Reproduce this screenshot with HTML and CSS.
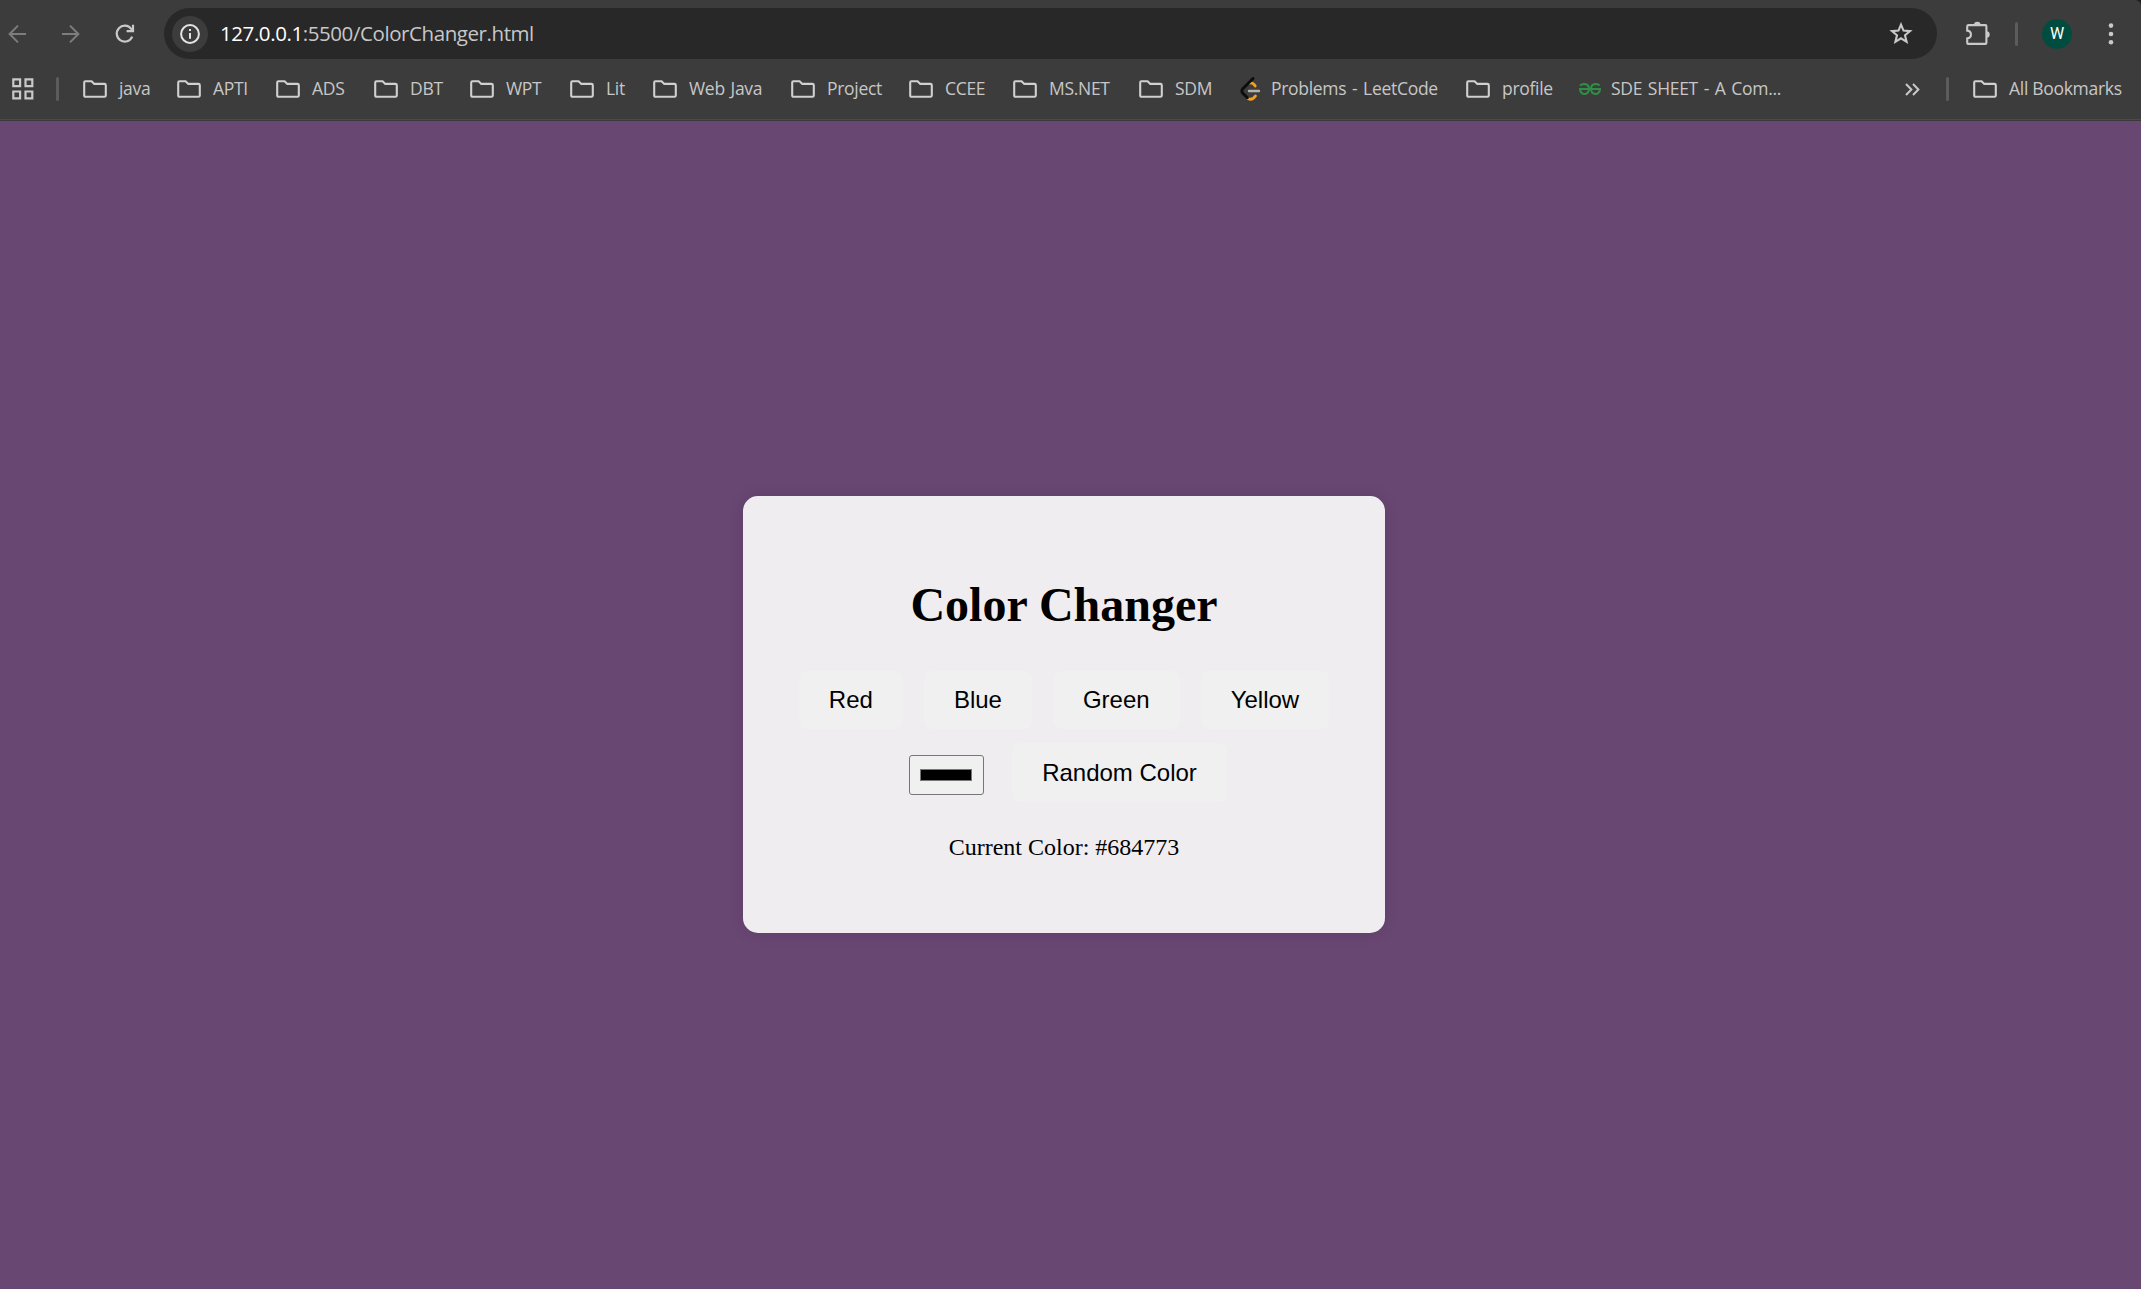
FILE: index.html
```html
<!DOCTYPE html>
<html lang="en">
<head>
<meta charset="utf-8">
<title>Color Changer</title>
<link rel="stylesheet" href="styles.css">
</head>
<body>
<svg width="0" height="0" class="defs">
  <symbol id="folder" viewBox="0 0 24 18"><path d="M1.2 2.4Q1.2 1.2 2.4 1.2H8.6L11.3 3.9H21.4Q22.8 3.9 22.8 5.2V15.4Q22.8 16.8 21.4 16.8H2.6Q1.2 16.8 1.2 15.4Z" fill="none" stroke="#d0d0d0" stroke-width="2.1"/></symbol>
</svg>
<header class="chrome">
  <div class="toolbar">
    <svg class="nav" width="18" height="20" viewBox="0 0 18 20" fill="none" stroke="#7d7d7d" stroke-width="2"><path d="M18 10H1.8M10 1.6L1.6 10L10 18.4"/></svg>
    <svg class="nav forward" width="18" height="20" viewBox="0 0 18 20" fill="none" stroke="#7d7d7d" stroke-width="2"><path d="M0 10H16.2M8 1.6L16.4 10L8 18.4"/></svg>
    <svg class="nav reload" width="20" height="20" viewBox="0 0 20 20" fill="none" stroke="#c9c9c9" stroke-width="2.2"><path d="M17.2 12.6A8 8 0 1 1 16.2 4.9L17.6 6.6"/><path d="M18 .8V7.2H11.6"/></svg>
    <div class="omnibox">
      <span class="info"><svg width="20" height="20" viewBox="0 0 20 20"><circle cx="10" cy="10" r="8.9" fill="none" stroke="#e3e3e3" stroke-width="2"/><path d="M10 9V14.8M10 5V7.1" stroke="#e3e3e3" stroke-width="2"/></svg></span>
      <span class="url"><b>127.0.0.1</b>:5500/ColorChanger.html</span>
      <svg class="star" width="24" height="23" viewBox="0 0 24 23"><path d="M12 2.6L14.5 8.6L21 9.1L16 13.3L17.6 19.8L12 16.3L6.4 19.8L8 13.3L3 9.1L9.5 8.6Z" fill="none" stroke="#c9c9c9" stroke-width="2.1"/></svg>
    </div>
    <svg class="puzzle" width="26" height="26" viewBox="0 0 26 26"><path d="M3.6 4.1H20.4Q21.4 4.1 21.4 5.1V21.9Q21.4 22.9 20.4 22.9H3.6Q2.2 22.9 2.2 21.7V17.4C7.2 16.9 7.2 10.1 2.2 9.6V5.4Q2.2 4.1 3.6 4.1Z" fill="none" stroke="#c9c9c9" stroke-width="2.1"/><path d="M9 4.1a3.3 3.3 0 0 1 6.6 0ZM21.4 10.3a3.3 3.3 0 0 1 0 6.6Z" fill="#c9c9c9"/></svg>
    <i class="divider"></i>
    <span class="avatar">W</span>
    <svg class="dots" width="6" height="22" viewBox="0 0 6 22" fill="#c9c9c9"><circle cx="3" cy="2.6" r="2.3"/><circle cx="3" cy="11" r="2.3"/><circle cx="3" cy="19.3" r="2.3"/></svg>
  </div>
  <nav class="bookmarks">
    <svg class="apps" width="22" height="22" viewBox="0 0 22 22" fill="none" stroke="#c9c9c9" stroke-width="2.2"><path d="M1.3 1.3H8.1V8.1H1.3ZM13.5 1.3H20.3V8.1H13.5ZM1.3 13.5H8.1V20.3H1.3ZM13.5 13.5H20.3V20.3H13.5Z"/></svg>
    <i class="divider"></i>
    <ul class="list">
      <li><svg class="folder"><use href="#folder"/></svg><span>java</span></li>
      <li><svg class="folder"><use href="#folder"/></svg><span>APTI</span></li>
      <li><svg class="folder"><use href="#folder"/></svg><span>ADS</span></li>
      <li><svg class="folder"><use href="#folder"/></svg><span>DBT</span></li>
      <li><svg class="folder"><use href="#folder"/></svg><span>WPT</span></li>
      <li><svg class="folder"><use href="#folder"/></svg><span>Lit</span></li>
      <li><svg class="folder"><use href="#folder"/></svg><span>Web Java</span></li>
      <li><svg class="folder"><use href="#folder"/></svg><span>Project</span></li>
      <li><svg class="folder"><use href="#folder"/></svg><span>CCEE</span></li>
      <li><svg class="folder"><use href="#folder"/></svg><span>MS.NET</span></li>
      <li><svg class="folder"><use href="#folder"/></svg><span>SDM</span></li>
      <li class="site"><svg class="leetcode" width="21" height="24" viewBox="0 0 21 24" fill="none" stroke-linecap="round" stroke-width="2.8"><path d="M10 6Q13 5.6 15.2 9M15.4 19Q12.4 23.4 8.4 21.8" stroke="#f5a01e"/><path d="M13 1.4L2.6 12Q1 14 2.6 16L7.4 20.8" stroke="#0c0c0c"/><path d="M9 14H19" stroke="#b3b3b3" stroke-width="2.4"/></svg><span>Problems - LeetCode</span></li>
      <li><svg class="folder"><use href="#folder"/></svg><span>profile</span></li>
      <li class="site"><svg class="geeks" width="22" height="12" viewBox="0 0 22 12" fill="none" stroke="#2f8d46" stroke-width="2.1"><path d="M1 2.6Q3 1 5.4 1Q10 1.4 10 6Q9.6 11 5.4 11Q1.4 10.6 1 6H21Q20.6 10.6 16.6 11Q12.4 11 12 6Q12 1.4 16.6 1Q19 1 20.6 2.6"/></svg><span>SDE SHEET - A Com...</span></li>
    </ul>
    <svg class="more" width="15" height="13" viewBox="0 0 15 13" fill="none" stroke="#c9c9c9" stroke-width="2"><path d="M1 1L6.4 6.5L1 12M8 1L13.4 6.5L8 12"/></svg>
    <i class="divider"></i>
    <span class="all"><svg class="folder"><use href="#folder"/></svg><span>All Bookmarks</span></span>
  </nav>
</header>
<main class="page">
  <section class="card">
    <h1>Color Changer</h1>
    <div class="row">
      <button>Red</button><button>Blue</button><button>Green</button><button>Yellow</button>
    </div>
    <div class="row second">
      <input type="color" value="#000000" aria-label="Pick a color"><button>Random Color</button>
    </div>
    <p>Current Color: #684773</p>
  </section>
</main>
</body>
</html>
```
FILE: styles.css
```css
* { box-sizing: border-box; }
body {
  margin: 0;
  height: 1289px;
  display: flex;
  flex-direction: column;
  overflow: hidden;
  background: #1f1f1f;
}
svg { display: block; flex: none; }
.defs { position: absolute; }

.chrome {
  height: 121px;
  flex: none;
  padding-top: 8px;
  background: #3c3c3c;
  border-bottom: 1px solid #3a3a3a;
  box-shadow: inset 0 -1px #4a4a4a;
  border-top-right-radius: 6px;
  color: #c7c7c7;
  font-family: "Open Sans", "Noto Sans", sans-serif;
}
.toolbar {
  display: flex;
  align-items: center;
  height: 51px;
  padding-left: 8px;
}
.forward { margin-left: 36px; }
.reload { margin-left: 35px; }
.omnibox {
  display: flex;
  align-items: center;
  width: 1773px;
  height: 51px;
  margin-left: 29px;
  padding: 0 24px 0 8px;
  border-radius: 26px;
  background: #282828;
}
.info {
  display: flex;
  align-items: center;
  justify-content: center;
  width: 36px;
  height: 36px;
  border-radius: 50%;
  background: #3c3c3c;
}
.url {
  margin-left: 12px;
  padding-bottom: 2px;
  font-size: 20.5px;
  letter-spacing: -0.42px;
  white-space: nowrap;
}
.url b { font-weight: 400; color: #fff; }
.star { margin-left: auto; }
.puzzle { margin-left: 28px; }
.divider {
  width: 3px;
  height: 24px;
  flex: none;
  border-radius: 2px;
  background: #5c5c5c;
}
.toolbar .divider { margin-left: 24px; }
.avatar {
  display: flex;
  align-items: center;
  justify-content: center;
  width: 30px;
  height: 30px;
  margin-left: 24px;
  border-radius: 50%;
  background: #004d40;
  color: #fff;
  font: 400 16px Roboto, sans-serif;
}
.dots { margin-left: 36px; }

.bookmarks {
  display: flex;
  align-items: center;
  height: 60px;
  padding-left: 12px;
  font-size: 17.5px;
  letter-spacing: -0.3px;
  white-space: nowrap;
}
.bookmarks > .divider { margin-left: 22px; }
.list {
  display: flex;
  width: 1822px;
  margin: 0 0 0 24px;
  padding: 0;
  list-style: none;
  word-spacing: 1.5px;
}
.list li, .all { display: flex; align-items: center; gap: 12px; }
.list li.site { gap: 10px; }
.list span, .all span { padding-bottom: 2px; }
.list li { flex: none; width: 99px; }
.list li:nth-child(1) { width: 94px; }
.list li:nth-child(3) { width: 98px; }
.list li:nth-child(4) { width: 96px; }
.list li:nth-child(5) { width: 100px; }
.list li:nth-child(6) { width: 83px; }
.list li:nth-child(7) { width: 138px; }
.list li:nth-child(8) { width: 118px; }
.list li:nth-child(9) { width: 104px; }
.list li:nth-child(10) { width: 126px; }
.list li:nth-child(11) { width: 101px; }
.list li:nth-child(12) { width: 226px; }
.list li:nth-child(13) { width: 113px; }
.list li:nth-child(14) { width: 210px; }
.folder { width: 24px; height: 18px; }
.bookmarks > .more + .divider { margin-left: 26px; }
.all { margin-left: 24px; }

.page {
  flex: 1;
  background: #684773;
  display: flex;
  justify-content: center;
  align-items: flex-start;
  padding: 375px 13px 0 0;
}
.card {
  width: 642px;
  height: 437px;
  padding-top: 81px;
  border-radius: 15px;
  background: rgba(255, 255, 255, 0.9);
  box-shadow: 0 0 15px rgba(0, 0, 0, 0.1);
  color: #000;
  font: 24px "Liberation Serif", serif;
  text-align: center;
}
h1 { margin: 0 0 39px; font-size: 48px; line-height: 55px; }
.row { display: flex; justify-content: center; gap: 21px; }
.second { margin-top: 14px; gap: 28px; padding-left: 8px; }
button {
  height: 58px;
  padding: 0 30px;
  border: 0;
  border-radius: 8px;
  background: #f0f0f0;
  color: #000;
  font: 24px "Liberation Sans", sans-serif;
}
.second button { height: 59px; }
input {
  width: 75px;
  height: 40px;
  margin: 12px 0 0;
  padding: 13px 11px 13px 10px;
  border: 1px solid #767676;
  border-radius: 3px;
  background: #f0f0f0;
}
input::-webkit-color-swatch-wrapper { padding: 0; }
input::-webkit-color-swatch { border: 1px solid #777; }
p { margin: 31px 0 0; line-height: 28px; }
```
